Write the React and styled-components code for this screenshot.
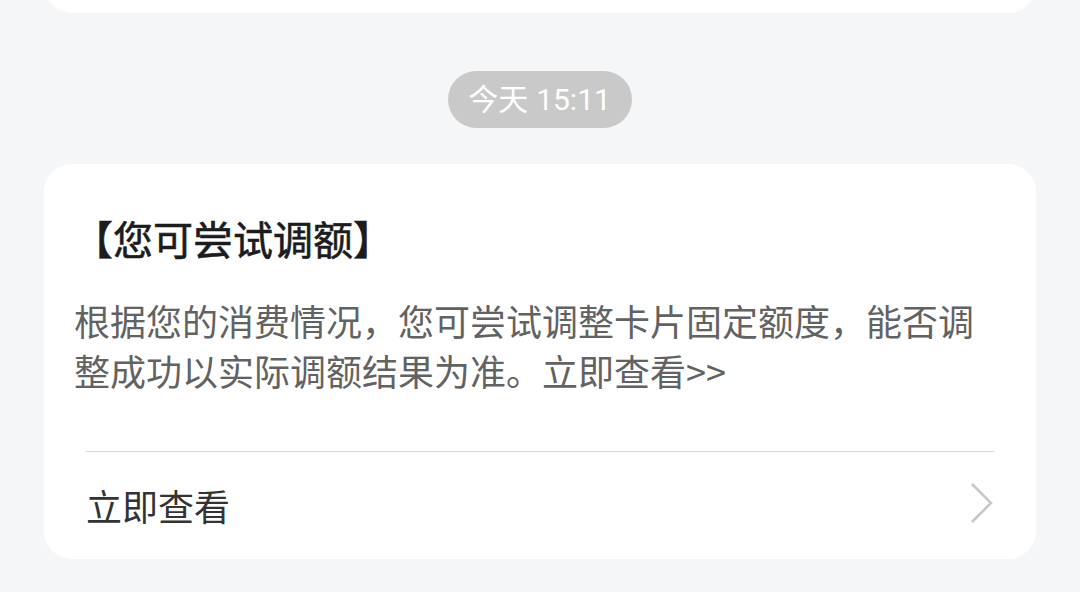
import React from 'react'
import styled, { createGlobalStyle } from 'styled-components'

const GlobalStyle = createGlobalStyle`
  html, body {
    margin: 0;
    padding: 0;
    background: #f5f6f8;
  }
  body {
    font-family: Roboto, "Noto Sans CJK SC", sans-serif;
    overflow: hidden;
  }
`

const Page = styled.div`
  width: 1080px;
  height: 592px;
  display: flex;
  flex-direction: column;
  align-items: stretch;
  padding: 0 44px;
  box-sizing: border-box;
  background: #f5f6f8;
`

const PrevCard = styled.div`
  height: 100px;
  margin-top: -87px;
  background: #fff;
  border-radius: 28px;
`

const TimeRow = styled.div`
  display: flex;
  justify-content: center;
  margin-top: 58px;
`

const TimePill = styled.div`
  height: 57px;
  padding: 0 21px 0 20px;
  border-radius: 29px;
  background: #c9c9c9;
  color: #fff;
  font-size: 30px;
  line-height: 57px;
  display: flex;
  align-items: center;
  gap: 8px;
`

const Card = styled.div`
  margin-top: 36px;
  background: #fff;
  border-radius: 28px;
  padding: 44px 0 0;
  display: flex;
  flex-direction: column;
`

const Title = styled.div`
  padding: 0 30px 0 29px;
  font-size: 40px;
  line-height: 60px;
  font-weight: 400;
  color: #1c1c1c;
  font-family: "Noto Sans CJK SC", sans-serif;
  -webkit-text-stroke: 0.6px #1c1c1c;
`

const Body = styled.div`
  margin-top: 27px;
  padding: 0 30px 0 30px;
  font-size: 36px;
  line-height: 50px;
  color: #626262;
  font-family: "Noto Sans CJK SC", sans-serif;
`

const Footer = styled.div`
  margin: 56px 42px 0;
  height: 107px;
  border-top: 1.5px solid #d6d6d6;
  display: flex;
  align-items: center;
  justify-content: space-between;
`

const FooterText = styled.span`
  font-size: 36px;
  color: #333;
  font-family: "Noto Sans CJK SC", sans-serif;
  margin-top: -2px;
`

const Chevron = () => (
  <svg width="24" height="42" viewBox="0 0 24 42" style={{ marginTop: -6 }}>
    <polyline points="2,2 21,21 2,40" fill="none" stroke="#c8c8c8" strokeWidth="2.6" />
  </svg>
)

const App = () => {
  return (
    <Page>
      <GlobalStyle />
      <PrevCard />
      <TimeRow>
        <TimePill>
          <span>今天</span>
          <span>15:11</span>
        </TimePill>
      </TimeRow>
      <Card>
        <Title>【您可尝试调额】</Title>
        <Body>
          根据您的消费情况，您可尝试调整卡片固定额度，能否调整成功以实际调额结果为准。立即查看&gt;&gt;
        </Body>
        <Footer>
          <FooterText>立即查看</FooterText>
          <Chevron />
        </Footer>
      </Card>
    </Page>
  )
}

export default App
